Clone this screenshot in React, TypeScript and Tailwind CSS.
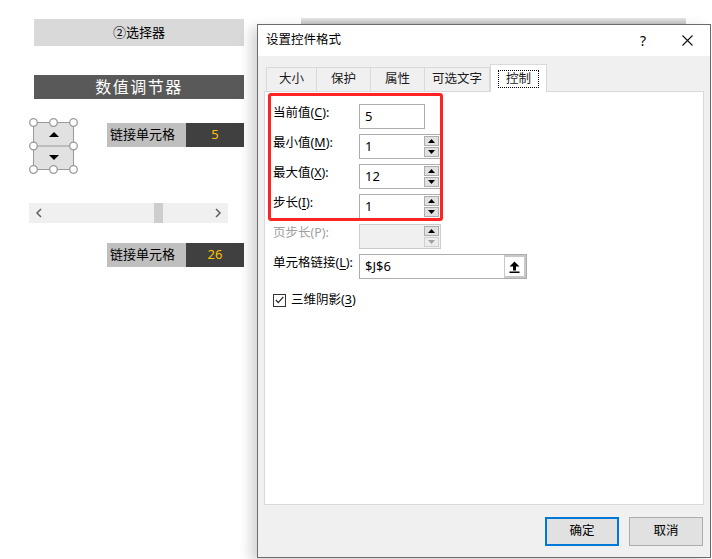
import React from 'react'

const font = { fontFamily: '"Noto Sans", "Noto Sans CJK SC", sans-serif' }

function Acc({ label, k, tail = '):' }: { label: string; k: string; tail?: string }) {
  return (
    <span>
      {label}(<span className="underline underline-offset-2">{k}</span>{tail}
    </span>
  )
}

function SpinBtns({ disabled = false }: { disabled?: boolean }) {
  const c = disabled ? '#a0a0a0' : '#000'
  return (
    <div className="flex h-full w-[16px] flex-col gap-[1px] py-[1px] pr-[1px]">
      <div className="flex flex-1 items-center justify-center border border-[#adadad] bg-[#e1e1e1]">
        <svg width="7" height="4" viewBox="0 0 7 4"><path d="M0 4 L3.5 0 L7 4 Z" fill="#000" /></svg>
      </div>
      <div className={`flex flex-1 items-center justify-center border ${disabled ? 'border-[#cfcfcf] bg-[#ececec]' : 'border-[#adadad] bg-[#e1e1e1]'}`}>
        <svg width="7" height="4" viewBox="0 0 7 4"><path d="M0 0 L3.5 4 L7 0 Z" fill={c} /></svg>
      </div>
    </div>
  )
}

function LinkCell({ value }: { value: string }) {
  return (
    <div className="flex h-[24px] w-[137px] text-[13px]">
      <div className="flex w-[79px] items-center bg-[#bfbfbf] pl-[3px] text-black">链接单元格</div>
      <div className="flex flex-1 items-center justify-center bg-[#404040] text-[#ffc000]">{value}</div>
    </div>
  )
}

function Row({ label, children }: { label: React.ReactNode; children: React.ReactNode }) {
  return (
    <div className="flex h-[25px] items-start">
      <div className="w-[86px] text-[12.5px] leading-[18px]">{label}</div>
      {children}
    </div>
  )
}

function SpinInput({ value, disabled = false }: { value: string; disabled?: boolean }) {
  return (
    <div className={`flex h-[25px] w-[82px] border ${disabled ? 'border-[#cccccc] bg-[#f0f0f0]' : 'border-[#adadad] bg-white'}`}>
      <div className="flex flex-1 items-center pl-[5px] text-[13px]">{value}</div>
      <SpinBtns disabled={disabled} />
    </div>
  )
}

export default function App() {
  return (
    <div className="relative h-[559px] w-[712px] overflow-hidden bg-white text-[#1a1a1a]" style={font}>
      {/* sheet controls */}
      <div className="flex w-[244px] flex-col pl-[29px] pt-[19px]">
        <div className="ml-[5px] flex h-[27px] w-[210px] items-center justify-center bg-[#d9d9d9] text-[13px] text-black">
          ②选择器
        </div>
        <div className="ml-[5px] mt-[29px] flex h-[24px] w-[210px] items-center justify-center bg-[#595959] text-[16px] tracking-[1.5px] text-white">
          数值调节器
        </div>
        <div className="mt-[19px] flex items-start">
          <svg width="50" height="56" viewBox="0 0 50 56" className="shrink-0">
            <rect x="4.5" y="4.5" width="40" height="47" fill="#e1e1e1" stroke="#9a9a9a" />
            <line x1="4.5" y1="28" x2="44.5" y2="28" stroke="#9a9a9a" />
            <path d="M20 19 L25 14 L30 19 Z" fill="#000" />
            <path d="M20 37 L25 42 L30 37 Z" fill="#000" />
            {[4.5, 24.5, 44.5].map(x =>
              [4.5, 28, 51.5].map(y =>
                x === 24.5 && y === 28 ? null : (
                  <circle key={`${x}-${y}`} cx={x} cy={y} r="3.8" fill="#fff" stroke="#9a9a9a" strokeWidth="1.3" />
                ),
              ),
            )}
          </svg>
          <div className="ml-[28px] mt-[5px]">
            <LinkCell value="5" />
          </div>
        </div>
        <div className="mt-[29px] flex h-[20px] w-[199px] items-center justify-between bg-[#f0f0f0] px-[6px]">
          <svg width="8" height="10" viewBox="0 0 8 10"><path d="M6 1 L2 5 L6 9" fill="none" stroke="#606060" strokeWidth="1.5" /></svg>
          <div className="ml-auto mr-[51px] h-[20px] w-[9px] bg-[#cdcdcd]" />
          <svg width="8" height="10" viewBox="0 0 8 10"><path d="M2 1 L6 5 L2 9" fill="none" stroke="#606060" strokeWidth="1.5" /></svg>
        </div>
        <div className="ml-[78px] mt-[20px]">
          <LinkCell value="26" />
        </div>
      </div>

      {/* strip behind dialog */}
      <div className="absolute left-[301px] top-[18px] h-[8px] w-[385px] bg-gradient-to-b from-[#e8e8e8] to-[#b8b8b8]" />

      {/* dialog window */}
      <div className="absolute left-[257px] top-[24px] flex h-[534px] w-[454px] flex-col border border-[#6b6b6b] bg-[#f0f0f0] shadow-[-6px_4px_12px_rgba(0,0,0,0.18)]">
        <div className="flex h-[31px] shrink-0 items-center bg-white pl-[8px] text-[12.5px] text-black">
          <span>设置控件格式</span>
          <span className="ml-auto mr-[36px] text-[14px]">?</span>
          <svg width="11" height="11" viewBox="0 0 11 11" className="mr-[17px]">
            <path d="M0.5 0.5 L10.5 10.5 M10.5 0.5 L0.5 10.5" stroke="#111" strokeWidth="1.1" />
          </svg>
        </div>

        <div className="flex flex-1 flex-col px-[6px] pt-[8px]">
          <div className="relative z-10 flex h-[27px] items-end pl-[2px] text-[12.5px]">
            {['大小', '保护', '属性', '可选文字'].map((t, i) => (
              <div
                key={t}
                className={`flex h-[24px] items-center justify-center border-t border-r border-[#d9d9d9] bg-[#f0f0f0] ${i === 0 ? 'border-l' : ''} ${['w-[51px]', 'w-[54px]', 'w-[54px]', 'w-[65px]'][i]}`}
              >
                {t}
              </div>
            ))}
            <div className="-mb-[1px] flex h-[28px] w-[57px] items-center justify-center border-x border-t border-[#d9d9d9] bg-white">
              <span className="border border-dotted border-black px-[7px] leading-[16px]">控制</span>
            </div>
          </div>

          <div className="relative flex h-[414px] flex-col gap-[5px] border border-[#d9d9d9] bg-white pl-[8px] pt-[12px] text-black">
            <div className="pointer-events-none absolute left-[3px] top-[1px] h-[128px] w-[175px] rounded-[3px] border-[3px] border-[#ff2323]" />
            <Row label={<Acc label="当前值" k="C" />}>
              <div className="flex h-[25px] w-[66px] items-center border border-[#adadad] pl-[5px] text-[13px]">5</div>
            </Row>
            <Row label={<Acc label="最小值" k="M" />}>
              <SpinInput value="1" />
            </Row>
            <Row label={<Acc label="最大值" k="X" />}>
              <SpinInput value="12" />
            </Row>
            <Row label={<Acc label="步长" k="I" />}>
              <SpinInput value="1" />
            </Row>
            <Row label={<span className="text-[#a0a0a0]">页步长(P):</span>}>
              <SpinInput value="" disabled />
            </Row>
            <Row label={<Acc label="单元格链接" k="L" />}>
              <div className="flex h-[25px] w-[168px] border border-[#adadad]">
                <div className="flex flex-1 items-center pl-[5px] text-[13px]">$J$6</div>
                <div className="flex w-[22px] items-center justify-center border-y-2 border-r-2 border-l border-[#c8c8c8] bg-white">
                  <svg width="11" height="12" viewBox="0 0 11 12">
                    <path d="M5.5 0.5 L10.5 5.5 L7 5.5 L7 9.5 L4 9.5 L4 5.5 L0.5 5.5 Z" fill="#000" />
                    <rect x="0.5" y="10.5" width="10" height="1.5" fill="#000" />
                  </svg>
                </div>
              </div>
            </Row>
            <div className="mt-[7px] flex items-center gap-[5px] text-[12.5px]">
              <div className="flex h-[13px] w-[13px] items-center justify-center border border-[#333]">
                <svg width="9" height="8" viewBox="0 0 9 8"><path d="M0.8 4 L3.3 6.6 L8.3 0.8" fill="none" stroke="#222" strokeWidth="1.2" /></svg>
              </div>
              <Acc label="三维阴影" k="3" tail=")" />
            </div>
          </div>

          <div className="mt-[12px] flex justify-end gap-[10px] pr-[1px] text-[12.5px] text-black">
            <div className="flex h-[29px] w-[74px] items-center justify-center border-2 border-[#0078d7] bg-[#e1e1e1]">确定</div>
            <div className="flex h-[29px] w-[74px] items-center justify-center border border-[#adadad] bg-[#e1e1e1]">取消</div>
          </div>
        </div>
      </div>
    </div>
  )
}
